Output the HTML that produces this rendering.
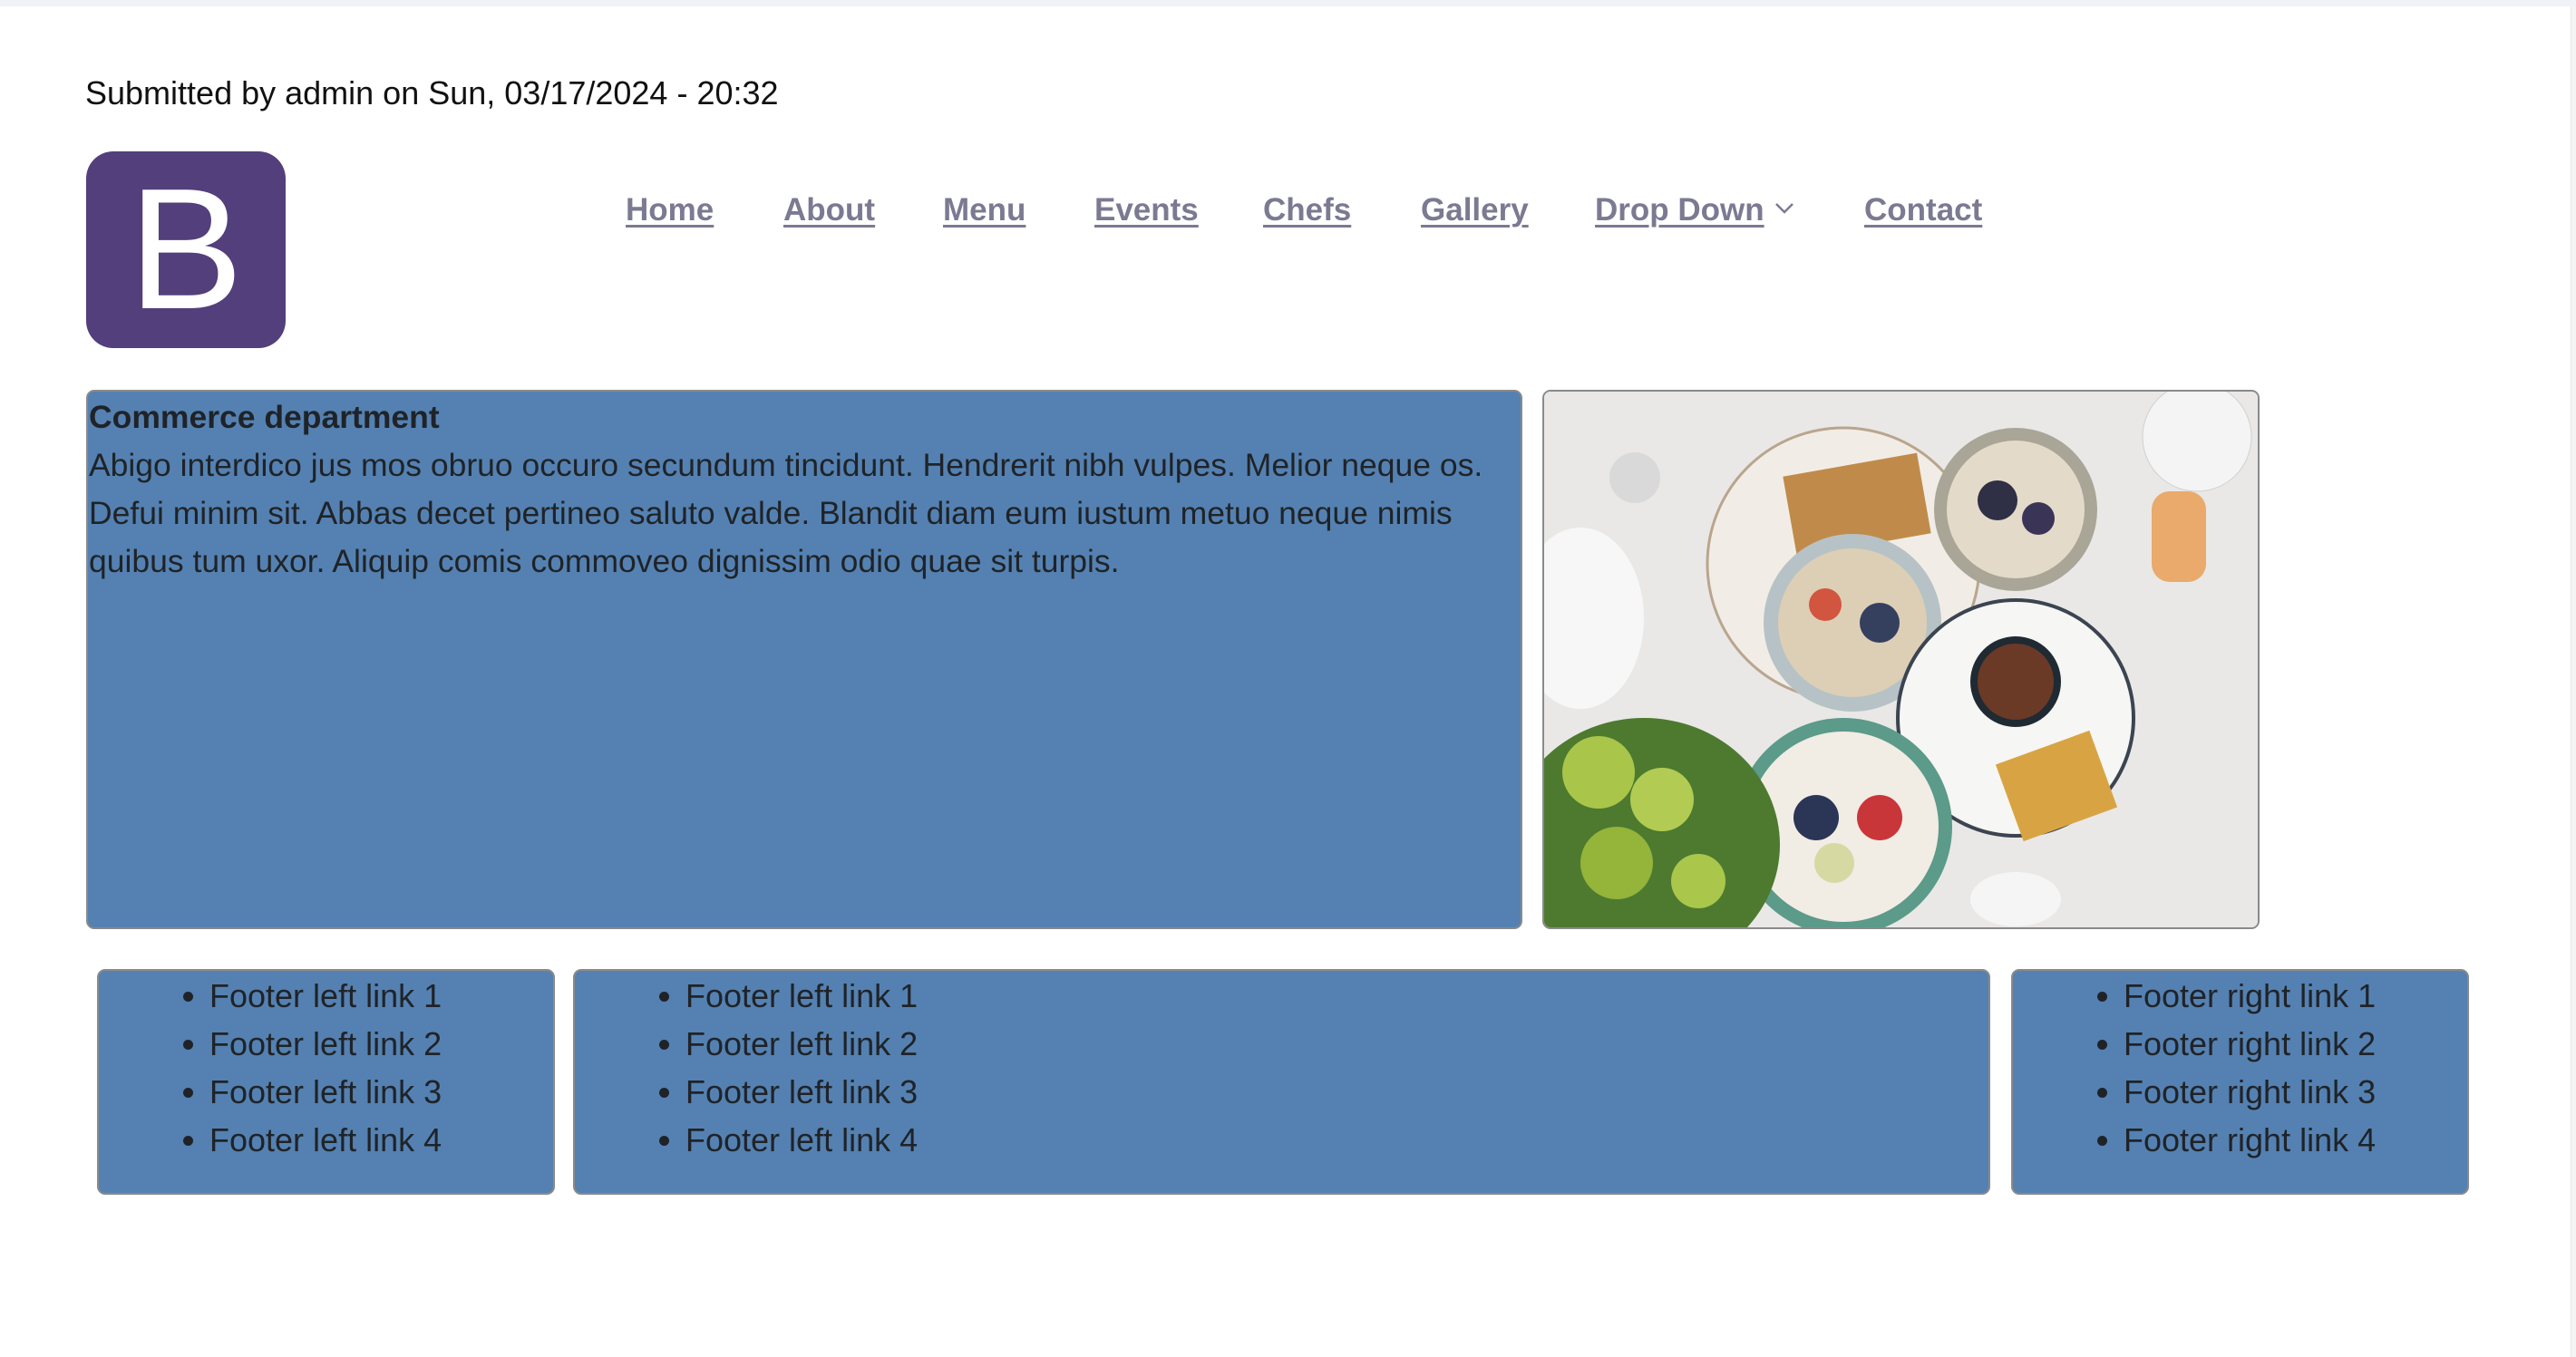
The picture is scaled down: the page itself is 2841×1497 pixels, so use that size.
<!DOCTYPE html>
<html><head><meta charset="utf-8">
<style>
html,body{margin:0;padding:0;background:#fff;}
body{width:2841px;height:1497px;position:relative;overflow:hidden;font-family:"Liberation Sans",sans-serif;color:#212529;}
.topbar{position:absolute;left:0;top:0;width:2841px;height:7px;background:#f1f2f7;}
.sb{position:absolute;right:0;top:7px;width:5px;height:1490px;background:#f4f4f4;border-left:1px solid #e6e6e6;}
.sub{position:absolute;left:94px;top:83px;font-size:36px;line-height:40px;color:#111;}
.logo{position:absolute;left:95px;top:167px;width:220px;height:217px;background:#533f7b;border-radius:30px;color:#fff;font-size:190px;line-height:217px;text-align:center;font-weight:400;}
.nav{position:absolute;top:210px;font-size:35px;line-height:44px;color:#7b7a92;font-weight:bold;text-decoration:underline;text-underline-offset:5px;text-decoration-thickness:3px;}
.box{position:absolute;background:#5481b1;border:2px solid #8a8a8a;border-radius:9px;box-sizing:border-box;}
.main{left:95px;top:430px;width:1584px;height:595px;font-size:35.5px;line-height:53px;padding:2px 0 0 1px;color:#1f2328;white-space:nowrap;}
.main b{display:block;}
.img{position:absolute;left:1701px;top:430px;width:791px;height:595px;border:2px solid #8a8a8a;border-radius:9px;overflow:hidden;box-sizing:border-box;background:#eceae8;}
.f ul{margin:0;padding:0 0 0 122px;font-size:36px;line-height:53px;color:#1f2328;}
.f{top:1069px;height:249px;padding-top:1px;}
</style></head><body>
<div class="topbar"></div>
<div class="sb"></div>
<div class="sub">Submitted by admin on Sun, 03/17/2024 - 20:32</div>
<div class="logo">B</div>
<div class="nav" style="left:690px">Home</div>
<div class="nav" style="left:864px">About</div>
<div class="nav" style="left:1040px">Menu</div>
<div class="nav" style="left:1207px">Events</div>
<div class="nav" style="left:1393px">Chefs</div>
<div class="nav" style="left:1567px">Gallery</div>
<div class="nav" style="left:1759px">Drop Down</div>
<svg style="position:absolute;left:1957px;top:223px" width="22" height="14" viewBox="0 0 22 14"><path d="M2 2 L11 11 L20 2" fill="none" stroke="#7b7a92" stroke-width="2.5"/></svg>
<div class="nav" style="left:2056px">Contact</div>

<div class="box main"><b>Commerce department</b>Abigo interdico jus mos obruo occuro secundum tincidunt. Hendrerit nibh vulpes. Melior neque os.<br>Defui minim sit. Abbas decet pertineo saluto valde. Blandit diam eum iustum metuo neque nimis<br>quibus tum uxor. Aliquip comis commoveo dignissim odio quae sit turpis.</div>

<div class="img">
<svg width="791" height="595" viewBox="0 0 791 595">
<rect width="791" height="595" fill="#e9e8e6"/>
<ellipse cx="330" cy="190" rx="150" ry="150" fill="#f1ede6" stroke="#b9a58e" stroke-width="3"/>
<rect x="270" y="80" width="150" height="90" fill="#c08b4a" transform="rotate(-10 345 125)"/>
<circle cx="520" cy="130" r="90" fill="#a9a597"/><circle cx="520" cy="130" r="76" fill="#e4dac9"/>
<circle cx="500" cy="120" r="22" fill="#2f2f45"/><circle cx="545" cy="140" r="18" fill="#3a3556"/>
<circle cx="340" cy="255" r="98" fill="#b7c2c6"/><circle cx="340" cy="255" r="82" fill="#dccfb5"/>
<circle cx="370" cy="255" r="22" fill="#34405e"/><circle cx="310" cy="235" r="18" fill="#d25540"/>
<circle cx="520" cy="360" r="130" fill="#f6f6f4" stroke="#3b4450" stroke-width="4"/>
<circle cx="520" cy="320" r="50" fill="#1f2a33"/><circle cx="520" cy="320" r="42" fill="#6a3a26"/>
<rect x="510" y="390" width="110" height="90" fill="#d8a443" transform="rotate(-20 565 435)"/>
<circle cx="330" cy="480" r="120" fill="#5c9a8a"/><circle cx="330" cy="480" r="105" fill="#f1ece4"/>
<circle cx="300" cy="470" r="25" fill="#2b3556"/><circle cx="370" cy="470" r="25" fill="#c9363a"/><circle cx="320" cy="520" r="22" fill="#d6d9a2"/>
<ellipse cx="110" cy="500" rx="150" ry="140" fill="#4d7a2f"/>
<circle cx="60" cy="420" r="40" fill="#a9c64a"/><circle cx="130" cy="450" r="35" fill="#b2cc53"/><circle cx="80" cy="520" r="40" fill="#94b43a"/><circle cx="170" cy="540" r="30" fill="#aac74c"/>
<ellipse cx="40" cy="250" rx="70" ry="100" fill="#f7f7f7"/>
<circle cx="100" cy="95" r="28" fill="#d9d9d9"/>
<circle cx="720" cy="50" r="60" fill="#f4f4f4" stroke="#d0d0d0"/>
<rect x="670" y="110" width="60" height="100" rx="20" fill="#e89a4c" opacity="0.8"/>
<ellipse cx="520" cy="560" rx="50" ry="30" fill="#f5f5f5"/>
</svg>
</div>

<div class="box f" style="left:107px;width:505px"><ul><li>Footer left link 1</li><li>Footer left link 2</li><li>Footer left link 3</li><li>Footer left link 4</li></ul></div>
<div class="box f" style="left:632px;width:1563px"><ul><li>Footer left link 1</li><li>Footer left link 2</li><li>Footer left link 3</li><li>Footer left link 4</li></ul></div>
<div class="box f" style="left:2218px;width:505px"><ul><li>Footer right link 1</li><li>Footer right link 2</li><li>Footer right link 3</li><li>Footer right link 4</li></ul></div>
</body></html>
